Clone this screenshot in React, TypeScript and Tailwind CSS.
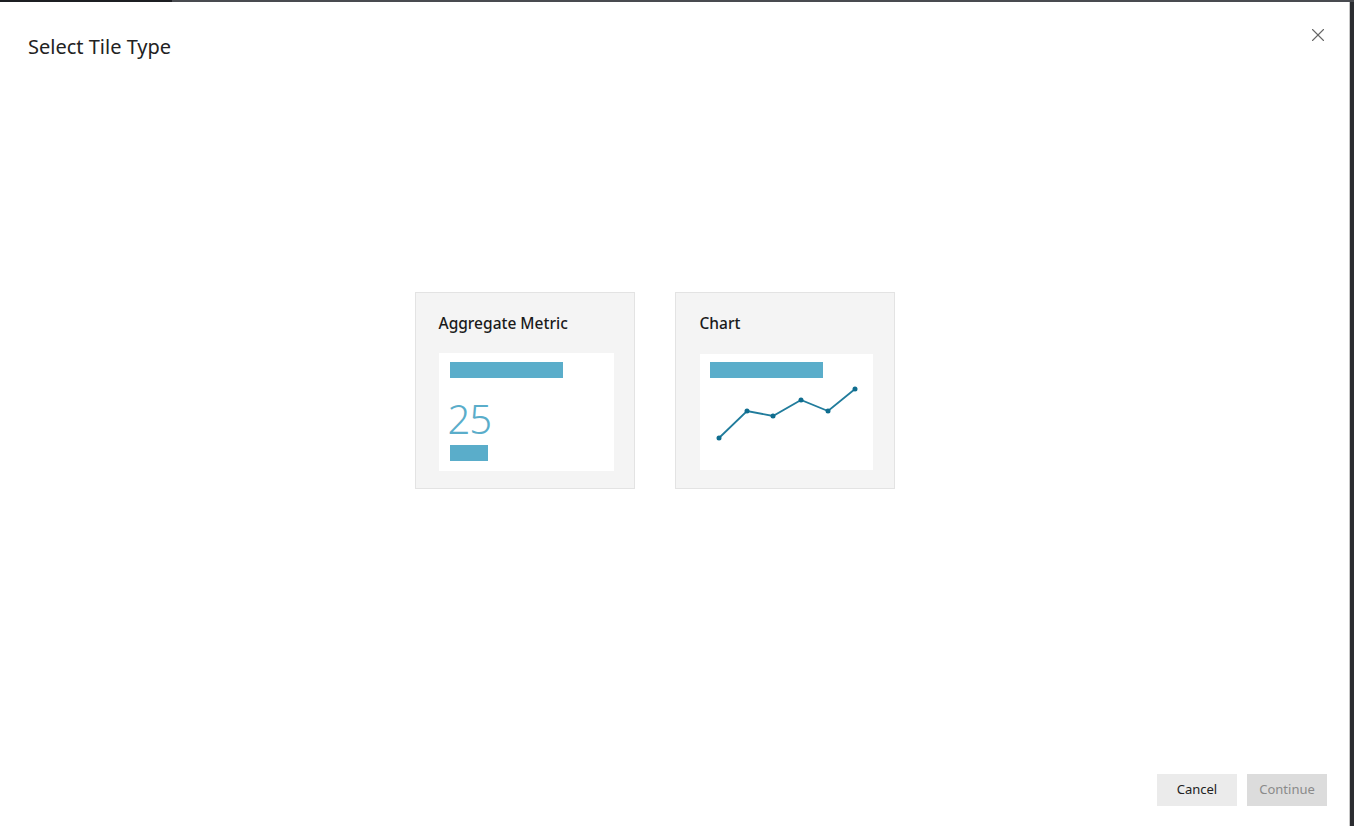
import { X } from "lucide-react";

const font = { fontFamily: '"Noto Sans", "Open Sans", sans-serif' };

function MetricPreview() {
  return (
    <div className="w-[175px] h-[118px] bg-white pt-[9px] pl-[11px] flex flex-col">
      <div className="w-[113px] h-[16px] bg-[#5aadca]" />
      <div className="mt-[19px] text-[40px] leading-[44px] font-light text-[#5aadca] tracking-[-1px] ml-[-2px]">25</div>
      <div className="mt-[4px] w-[38px] h-[16px] bg-[#5aadca]" />
    </div>
  );
}

function ChartPreview() {
  const pts: [number, number][] = [
    [19, 84], [47, 57], [73, 62], [101, 46], [128, 57], [155, 35],
  ];
  return (
    <div className="relative w-[173px] h-[116px] bg-white pt-[8px] pl-[10px]">
      <div className="w-[113px] h-[16px] bg-[#5aadca]" />
      <svg className="absolute left-0 top-0" width="173" height="116" viewBox="0 0 173 116">
        <polyline
          points={pts.map((p) => p.join(",")).join(" ")}
          fill="none"
          stroke="#217c9c"
          strokeWidth="1.8"
        />
        {pts.map((p, i) => (
          <circle key={i} cx={p[0]} cy={p[1]} r="2.5" fill="#0f6d8f" />
        ))}
      </svg>
    </div>
  );
}

export default function App() {
  return (
    <div className="w-[1354px] h-[826px] bg-[#2b2d31] flex flex-col overflow-hidden" style={font}>
      <div className="h-[2px] flex">
        <div className="w-[172px] bg-[#1c1e22]" />
        <div className="flex-1 bg-[#494b50]" />
      </div>
      <div className="flex">
        <div className="w-[1350px] h-[824px] bg-white flex flex-col border-r border-[#c8c8c8]">
          {/* Header */}
          <div className="flex items-start justify-between pl-[28px] pr-[20px] pt-[31px]">
            <h1 className="text-[20px] leading-[28px] text-[#222]">Select Tile Type</h1>
            <button className="mt-[-9px] text-[#666]">
              <X className="w-[22px] h-[22px]" strokeWidth={1.2} />
            </button>
          </div>

          {/* Tiles */}
          <div className="flex justify-center gap-[40px] pr-[40px] mt-[231px]">
            <div className="w-[220px] h-[197px] bg-[#f4f4f4] border border-[#e3e3e3] pt-[19px] pl-[23px]">
              <div className="text-[15.5px] leading-[22px] font-medium text-[#1a1a1a]">Aggregate Metric</div>
              <div className="mt-[19px]">
                <MetricPreview />
              </div>
            </div>
            <div className="w-[220px] h-[197px] bg-[#f4f4f4] border border-[#e3e3e3] pt-[19px] pl-[24px]">
              <div className="text-[15.5px] leading-[22px] font-medium text-[#1a1a1a]">Chart</div>
              <div className="mt-[20px]">
                <ChartPreview />
              </div>
            </div>
          </div>

          {/* Footer */}
          <div className="mt-auto flex justify-end gap-[10px] pr-[22px] pb-[20px]">
            <button className="w-[80px] h-[32px] bg-[#ebebeb] text-[13px] text-[#222]">Cancel</button>
            <button className="w-[80px] h-[32px] bg-[#dcdcdc] text-[13px] text-[#8a8a8a]">Continue</button>
          </div>
        </div>
      </div>
    </div>
  );
}
